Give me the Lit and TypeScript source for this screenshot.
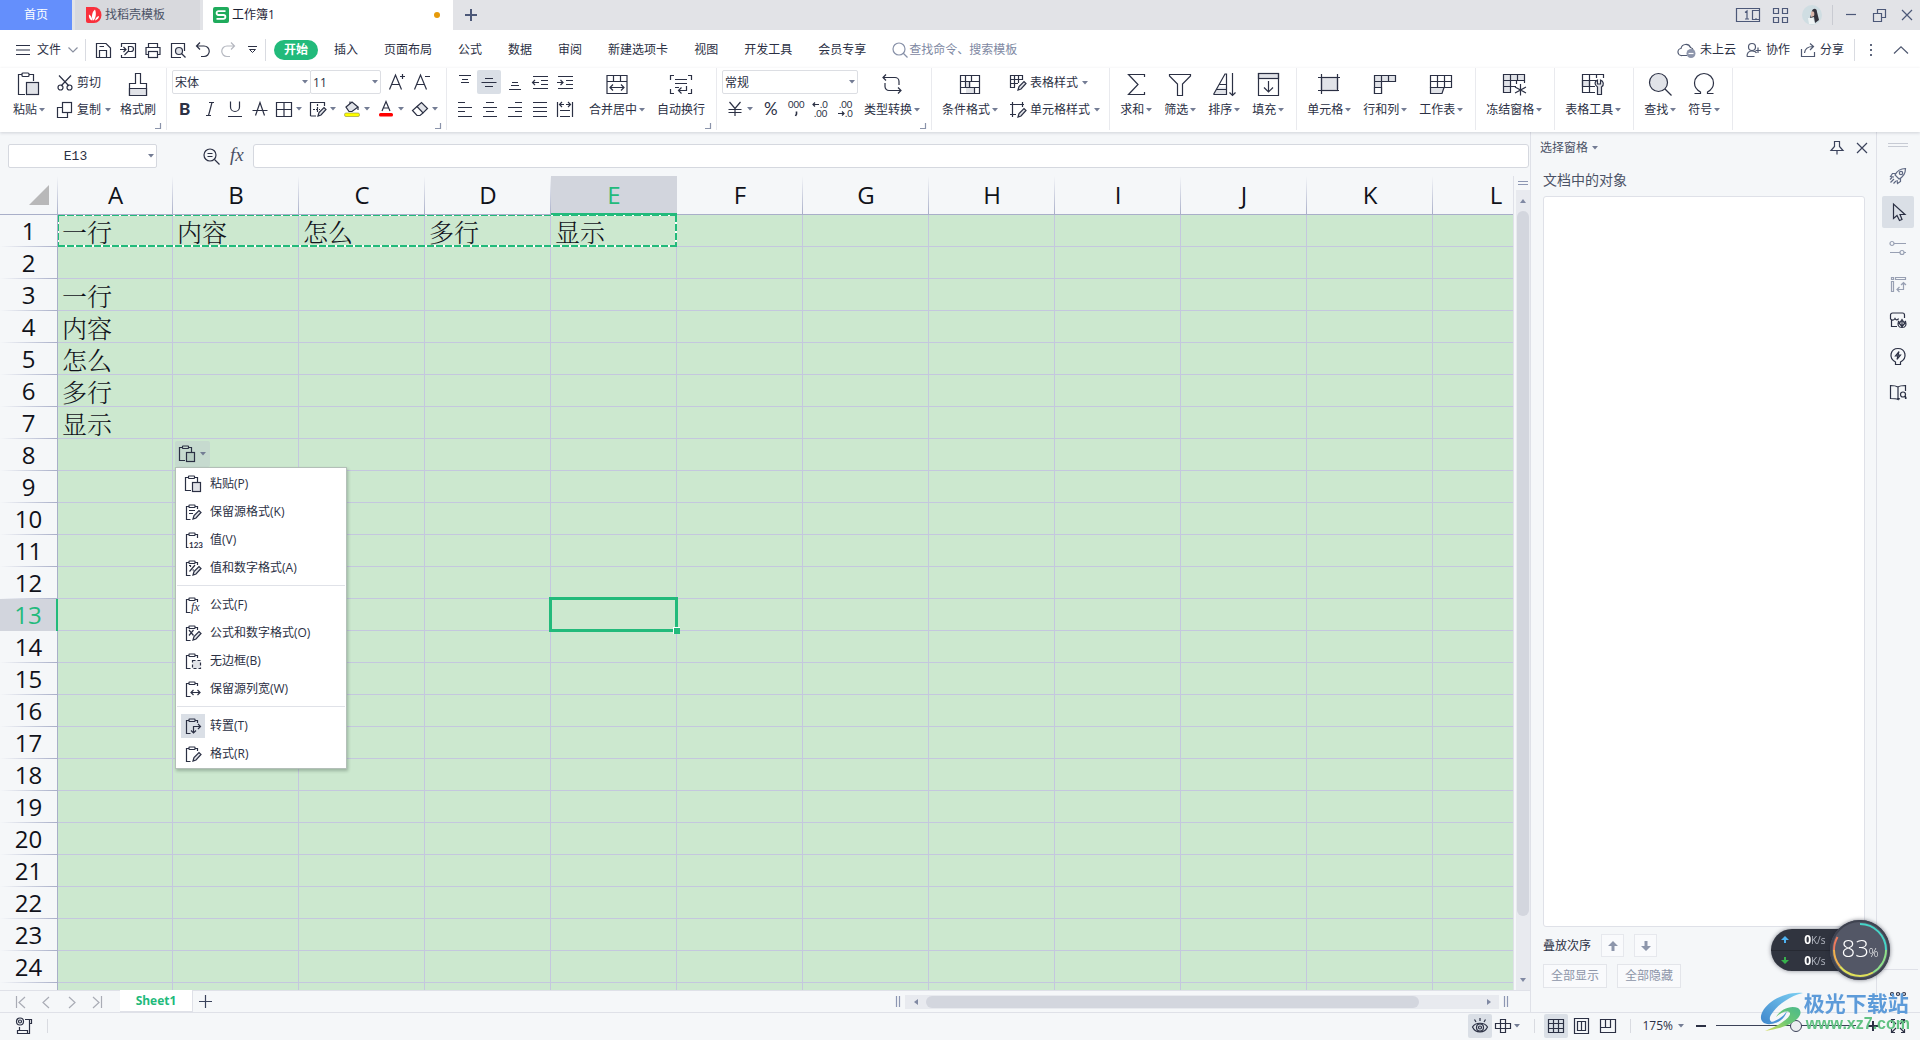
import { LitElement, html, svg, css, nothing, TemplateResult, SVGTemplateResult } from "lit";
import { customElement, state } from "lit/decorators.js";
import { classMap } from "lit/directives/class-map.js";

const icon = (w: number, h: number, body: SVGTemplateResult) =>
  html`<svg class="icon" width=${w} height=${h} viewBox="0 0 ${w} ${h}" aria-hidden="true">${body}</svg>`;

const caret = html`<svg class="caret" width="6" height="4" viewBox="0 0 6 4" aria-hidden="true"><path d="M0 0H6L3 3.6Z" /></svg>`;
const close = icon(12, 12, svg`<path d="M1 1L11 11M11 1L1 11" />`);

/* Ribbon, large */
const big = {
  paste: icon(24, 24, svg`<path d="M8 22.5H1.500V2.500H5M12 2.500H16.500V9" /><rect x="5" y="1" width="7" height="3.500" rx="1" /><rect class="tint" x="9.500" y="10.500" width="12" height="12" />`),
  brush: icon(24, 24, svg`<path d="M9.500 11.500V1.500H14.500V11.500H20.500V23.500H3.500V11.500Z" /><path class="tint" d="M3.500 16.500H20.500V23.500H3.500Z" />`),
  merge: icon(24, 24, svg`<path d="M2 3.500H22V21.500H2ZM2 9.500H22M8.500 3.500V9.500M15.500 3.500V9.500M5 15.500H19M8 12.500L5 15.500 8 18.500M16 12.500L19 15.500 16 18.500" />`),
  wrap: icon(24, 24, svg`<path d="M5 3.500H1.500V8M19 3.500H22.500V8M1.500 17V21.500H5M22.500 17V21.500H19M6 7.500H18M6 11.500H18M6 15.500H10M17.500 14V18.500H10M12.500 15.500L9.500 18.500 12.500 21.500" />`),
  convert: icon(24, 24, svg`<path d="M6 2.500L3 5.500 6 8.500M3 5.500H15A4 4 0 0 1 19 9.500V13M18 15.500L21 18.500 18 21.500M21 18.500H9A4 4 0 0 1 5 14.500V11" />`),
  cond: icon(24, 24, svg`<path class="tint" d="M8 9.500H13V15.500H17V21.500H8Z" stroke="none" /><path d="M2.500 3.500H21.500V21.500H2.500ZM2.500 9.500H21.500M2.500 15.500H21.500M7.500 3.500V15.500M13.500 3.500V9.500M11.500 9.500V15.500M16.500 15.500V21.500" />`),
  sum: icon(24, 24, svg`<path d="M20.500 5V2.500H4.500L14 12.500 4.500 22.500H20.500V20" />`),
  filter: icon(24, 24, svg`<path d="M1.500 2.500H22.500V4L14.500 12V23.500H9.500V12L1.500 4Z" />`),
  sort: icon(24, 24, svg`<path class="tint" d="M5 15.500H14.500V22.500H2Z" stroke="none" /><path d="M1.500 22.500L13 2H14.500V22.500H1.500M7.500 12.500H14.500M4.500 17.500H14.500M20.500 1V23.500M17.500 20.500L20.500 23.500 23.500 20.500" />`),
  fill: icon(24, 24, svg`<rect class="tint" x="2.500" y="1.500" width="20" height="5" /><path d="M2.500 1.500H22.500V23.500H2.500ZM12.500 9V19.500M8 15.500L12.500 20 17 15.500" />`),
  cell: icon(24, 24, svg`<rect class="tint" x="4.500" y="5.500" width="16" height="13" /><path d="M4.500 2V22M20.500 2V17M1 5.500H23M1 18.500H19M20 18.500H22" />`),
  rowcol: icon(24, 24, svg`<path class="tint" d="M1.500 3.500H22.500V9.500H8.500V21.500H1.500Z" /><path d="M1.500 9.500H8.500V3.500M15.500 3.500V9.500" /><path class="blank" d="M1.500 15.500H8.500V21.500H1.500Z" />`),
  sheet: icon(24, 24, svg`<path class="tint" d="M1.500 15.500H15L13 21.500H1.500Z" /><path d="M1.500 3.500H22.500V15.500H1.500ZM1.500 9.500H22.500M8.500 3.500V15.500M15.500 3.500V15.500" />`),
  freeze: icon(24, 24, svg`<path class="tint" d="M1.500 2.500H22.500V8.500H8.500V20.500H1.500Z" /><path d="M1.500 8.500H8.500V2.500M15.500 2.500V8.500M1.500 14.500H14M14.500 8.500V12M22.500 8.500V11M18.500 12V23.500M13 15L24 21M24 15L13 21" />`),
  tool: icon(24, 24, svg`<path class="tint" d="M1.500 8.500H8.500V14.500H1.500Z" /><path d="M22.500 6V2.500H1.500V20.500H14M1.500 8.500H15M1.500 14.500H14M8.500 2.500V20.500M15.500 2.500V6" /><path class="tint" d="M16.500 8V12H19.500V8C22.500 9 23.500 13 20.500 15V22.500H16.500V15C13 13 13.500 9 16.500 8Z" />`),
  find: icon(24, 24, svg`<circle class="tint" cx="10.500" cy="10.500" r="9" /><path d="M17 17L23.500 23.500" />`),
  omega: icon(24, 24, svg`<path d="M2.500 21.500H8.500V20C4 17.500 2.500 14.500 2.500 11A9.500 9.500 0 0 1 21.500 11C21.500 14.500 20 17.500 15.500 20V21.500H21.500" />`),
};

const pen = svg`<path class="tint" d="M8 15L9 11.500 14 6.500 16 8.500 11 14Z" />`;
/* Ribbon, small */
const sm = {
  cut: icon(16, 16, svg`<path d="M2 .5L12 11M14 .5L4 11" /><circle cx="3.500" cy="12.500" r="2.500" /><circle cx="12.500" cy="12.500" r="2.500" />`),
  copy: icon(16, 16, svg`<path d="M5 5.500H.5V15.500H10.500V11" /><rect x="5.500" y=".5" width="9" height="10" />`),
  under: icon(16, 16, svg`<path d="M3.500 .5V6A4.500 4.500 0 0 0 12.500 6V.5M1 15.500H15" />`),
  strike: icon(16, 16, svg`<path d="M3.500 14.500L8 1.500 12.500 14.500M.5 9.500H15.500" />`),
  border: icon(16, 16, svg`<path d="M.5 1.500H15.500V15.500H.5ZM8 1.500V15.500M.5 8.500H15.500" />`),
  draw: icon(16, 16, svg`<path d="M.5 15V1.500H14.500V5M.5 15H6" /><path d="M7.500 3V12M3 8.500H10" stroke-dasharray="2 1" />${pen}`),
  bucket: icon(16, 16, svg`<path class="tint" d="M2 6L8 1 14 6 8 10.500H5Z" /><path d="M6 3V.5M14 6V9" /><rect x=".5" y="12" width="15" height="3.500" rx="1.500" fill="#ff0" stroke="#8a8a40" stroke-width=".6" />`),
  color: icon(16, 16, svg`<path d="M4 10L8 .5 12 10M5.500 7H10.500" /><rect x="1" y="12" width="14" height="3.500" rx="1.500" fill="#f00" stroke="none" />`),
  erase: icon(16, 16, svg`<path class="tint" d="M5 5.500L9.500 1.500 15.500 7.500 11 12Z" /><path d="M5 5.500L.5 9.500 5 14.500H8L11 12" />`),
  top: icon(16, 16, svg`<path d="M2 1.500H14M5 5.500H11M4 8.500H12" />`),
  mid: icon(16, 16, svg`<path d="M4 4.500H12M.5 8.500H15.500M4 12.500H12" />`),
  bottom: icon(16, 16, svg`<path d="M5 8.500H11M4 11.500H12M2 15.500H14" />`),
  outdent: icon(16, 16, svg`<path d="M1 2.500H16M9 6.500H16M9 10.500H16M1 14.500H16M.5 8.500H7M3 6L.5 8.500 3 11" />`),
  indent: icon(16, 16, svg`<path d="M1 2.500H16M9 6.500H16M9 10.500H16M1 14.500H16M0 8.500H6M3.500 6L6 8.500 3.500 11" />`),
  left: icon(16, 16, svg`<path d="M1 1.500H8M1 6.500H15M1 10.500H8M1 15.500H15" />`),
  center: icon(16, 16, svg`<path d="M4 1.500H12M1 6.500H15M4 10.500H12M1 15.500H15" />`),
  right: icon(16, 16, svg`<path d="M8 1.500H15M1 6.500H15M8 10.500H15M1 15.500H15" />`),
  justify: icon(16, 16, svg`<path d="M1 1.500H15M1 6.500H15M1 10.500H15M1 15.500H15" />`),
  distribute: icon(16, 16, svg`<path d="M.5 1V16M15.500 1V16M3 3.500H7M9 3.500H13M5 1L2.500 3.500 5 6M11 1L13.500 3.500 11 6M3 9.500H13M3 15.500H13" />`),
  yen: icon(16, 16, svg`<path d="M2.500 1L8 7.500 13.500 1M8 7.500V15M1.500 8.500H14.500M1.500 11.500H14.500" />`),
  tstyle: icon(16, 16, svg`<path d="M5 12.500H.5V.5H12.500V5M.5 4.500H12.500M.5 8.500H8M4.500 .5V12.500M8.500 .5V8" />${pen}`),
  cstyle: icon(16, 16, svg`<path d="M2.500 0V15M0 2.500H14M12.500 0V5M0 12.500H6" />${pen}`),
};

/* Quick access and title */
const q = {
  menu: icon(14, 12, svg`<path d="M0 1.500H14M0 6H14M0 10.500H14" />`),
  down: icon(10, 6, svg`<path d="M.5 .5L5 5 9.500 .5" stroke="#8a90a0" />`),
  save: icon(16, 16, svg`<path d="M1.500 1.500H11L15.500 6V15.500H1.500ZM4.500 15.500V8.500H11.500V15.500M4.500 4.500H9" />`),
  exp: icon(16, 16, svg`<path d="M1.500 5V1.500H15.500V15.500H1.500V13M0 7.500H5.500M3.500 5L6 7.500 3.500 10M4.500 13L8.500 9V4.500H11A2 2 0 0 1 11 9.500H8.500" />`),
  print: icon(16, 16, svg`<path d="M3.500 5V1.500H12.500V5M3.500 12.500H1V5.500H15V12.500H12.500" /><rect x="3.500" y="9.500" width="9" height="6" />`),
  preview: icon(16, 16, svg`<path d="M14.500 9V1.500H1.500V15.500H11" /><circle class="tint" cx="9" cy="9" r="3.500" /><path d="M11.500 11.500L15.500 15.500" />`),
  undo: icon(16, 16, svg`<path d="M5 .5L1.500 4 5 7.500M1.500 4H9A5 5 0 0 1 9 14.500H6" />`),
  redo: icon(16, 16, svg`<path d="M11 .5L14.500 4 11 7.500M14.500 4H7A5 5 0 0 0 7 14.500H10" stroke="#b5b8c0" />`),
  more: icon(9, 8, svg`<path d="M0 .5H9M1.500 3.500H7.500L4.500 6.500Z" stroke-width="1" />`),
  search: icon(16, 16, svg`<circle cx="7" cy="7" r="6" /><path d="M11 11L15.500 15.500" />`),
  cloud: icon(18, 16, svg`<path d="M9 13.500H4A3.500 3.500 0 0 1 3 6.500A5 5 0 0 1 12.500 5.500C14 6 15 7 15 8" /><circle cx="13" cy="11.500" r="4.500" fill="#8d95ab" stroke="none" /><path d="M10.500 11.500H15.500" stroke="#fff" />`),
  people: icon(16, 16, svg`<circle cx="6" cy="5" r="3.500" /><path d="M1 14.500C1 10 3 9 6 9S10 10 10.500 11M1 14.500H8.500M12 5.500V11M9.500 8.500H15" />`),
  share: icon(16, 16, svg`<path d="M1.500 7V14.500H14.500V10M4.500 11C5 7 8 4.500 13 4.500M10 1.500L13.500 4.500 10 8" />`),
  dots: icon(4, 14, svg`<path d="M1 1H3V3H1ZM1 6H3V8H1ZM1 11H3V13H1Z" fill="#60687e" stroke="none" />`),
  up: icon(16, 8, svg`<path d="M1 7.500L8 .8 15 7.500" />`),
  corner: icon(6, 6, svg`<path d="M5.500 0V5.500H0" stroke="#8a93aa" />`),
};

/* Paste option icons share one clipboard outline */
const board = svg`<path d="M5.500 15.500H1.500V2.500H4M10 2.500H12.500V5" /><rect x="4" y="1" width="6" height="2.500" rx=".5" />`;
const po = (extra: SVGTemplateResult) => icon(16, 16, svg`${board}${extra}`);
const pasteIcon = icon(16, 18, svg`<path d="M6 15.500H.5V2.500H3.500M9.500 2.500H12.500V7" /><rect x="3.500" y="1" width="6" height="2.500" rx=".5" /><rect class="tint" x="7.500" y="7.500" width="8" height="9" />`);

const pasteMenu: { label: string; icon: TemplateResult; on?: boolean }[][] = [
  [
    { label: "粘贴(P)", icon: pasteIcon },
    { label: "保留源格式(K)", icon: po(svg`<path d="M4 6.500H10M4 9.500H8" />${pen}`) },
    { label: "值(V)", icon: icon(16, 16, svg`<path d="M3.500 15.500H1.500V2.500H4M10 2.500H12.500V6" /><rect x="4" y="1" width="6" height="2.500" rx=".5" /><text class="bold" x="4" y="16" font-size="8">123</text>`) },
    { label: "值和数字格式(A)", icon: po(svg`<path d="M4 5.500H5.500V7M10 5L4.500 11.500M9 10H7.500" />${pen}`) },
  ],
  [
    { label: "公式(F)", icon: po(svg`<text class="serif" x="6" y="14" font-size="12">fx</text>`) },
    { label: "公式和数字格式(O)", icon: po(svg`<path d="M4 5L8.500 10.500M8.500 5L4 10.500" />${pen}`) },
    { label: "无边框(B)", icon: po(svg`<rect class="tint" x="7.500" y="7.500" width="8" height="8" stroke-dasharray="3 2" />`) },
    { label: "保留源列宽(W)", icon: po(svg`<path d="M6 11.500H15M8.500 9L6 11.500 8.500 14M12.500 9L15 11.500 12.500 14" />`) },
  ],
  [
    { label: "转置(T)", icon: po(svg`<path d="M8.500 15V8.500H15.500M13 6L15.500 8.500 13 11M6 12.500L8.500 15 11 12.500" />`), on: true },
    { label: "格式(R)", icon: po(pen) },
  ],
];

type Btn = { icon: TemplateResult; name: string; drop?: boolean; on?: boolean };
const fontTools: Btn[] = [
  { icon: icon(16, 16, svg`<text x="2" y="14" font-size="17" class="heavy">B</text>`), name: "加粗" },
  { icon: icon(16, 16, svg`<path d="M7 1.500H12M4 14.500H9M10 1.500L6.500 14.500" />`), name: "倾斜" },
  { icon: sm.under, name: "下划线" },
  { icon: sm.strike, name: "删除线" },
  { icon: sm.border, name: "边框", drop: true },
  { icon: sm.draw, name: "绘图边框", drop: true },
  { icon: sm.bucket, name: "填充颜色", drop: true },
  { icon: sm.color, name: "字体颜色", drop: true },
  { icon: sm.erase, name: "清除", drop: true },
];
const alignTools: Btn[] = [
  { icon: sm.top, name: "顶端对齐" },
  { icon: sm.mid, name: "垂直居中", on: true },
  { icon: sm.bottom, name: "底端对齐" },
  { icon: sm.outdent, name: "减少缩进" },
  { icon: sm.indent, name: "增加缩进" },
  { icon: sm.left, name: "左对齐" },
  { icon: sm.center, name: "居中" },
  { icon: sm.right, name: "右对齐" },
  { icon: sm.justify, name: "两端对齐" },
  { icon: sm.distribute, name: "分散对齐" },
];
const digits = (a: SVGTemplateResult) => icon(16, 18, a);
const numTools: Btn[] = [
  { icon: icon(16, 16, svg`<text x="1" y="14" font-size="17">%</text>`), name: "百分比" },
  { icon: digits(svg`<text x="0" y="8" font-size="9.500">000</text><path d="M8.500 11.500V14L7.500 16" stroke-width="1.600" />`), name: "千位分隔" },
  { icon: digits(svg`<text x="7" y="8" font-size="9.500">.0</text><text x="1" y="17" font-size="9.500">.00</text><path d="M0 4.500H6M2 2.500L0 4.500 2 6.500" />`), name: "增加小数位" },
  { icon: digits(svg`<text x="1" y="8" font-size="9.500">.00</text><text x="7" y="17" font-size="9.500">.0</text><path d="M0 13.500H6M4 11.500L6 13.500 4 15.500" />`), name: "减少小数位" },
];

const menuTabs = ["开始", "插入", "页面布局", "公式", "数据", "审阅", "新建选项卡", "视图", "开发工具", "会员专享"];
const columns = "ABCDEFGHIJKL".split("");
const cells: Record<string, string> = {
  A1: "一行", B1: "内容", C1: "怎么", D1: "多行", E1: "显示",
  A3: "一行", A4: "内容", A5: "怎么", A6: "多行", A7: "显示",
};

const rail: { icon: TemplateResult; name: string; cls?: string }[] = [
  { name: "快捷", cls: "soft", icon: icon(18, 18, svg`<path d="M16.500 1.500C11 1.500 8 4 6 8L10 12C14 10 16.500 7 16.500 1.500ZM7 6.500H3.500L1.500 9.500 5 10M11.500 11V14.500L8.500 16.500 8 13M5 12L1.500 15.500M3 10.500L1 12.500M7 14L4.500 16.500" /><circle cx="12" cy="6" r="1.700" />`) },
  { name: "选择", cls: "on", icon: icon(18, 20, svg`<path d="M4.500 2V16.500L8 13.500 10.500 18.500 13 17.500 11 12.500H16Z" />`) },
  { name: "属性", cls: "pale", icon: icon(18, 18, svg`<circle cx="3" cy="4.500" r="2" /><path d="M5 4.500H17M1 13.500H11M15 13.500H17" /><circle cx="13" cy="13.500" r="2" />`) },
  { name: "分析", cls: "pale", icon: icon(18, 18, svg`<path d="M2.500 2.500H4.500V4.500H2.500ZM6.500 2.500H16.500V4.500H6.500ZM2.500 6.500H4.500V16.500H2.500ZM14.500 15V8M12 10L14.500 7.500 17 10M14.500 14.500H8M10.500 12L8 14.500 10.500 17" />`) },
  { name: "稻壳", icon: icon(18, 18, svg`<path d="M2.500 9V15.500H8M1.500 8V4A2 2 0 0 1 3.500 2H13.500A2 2 0 0 1 15.500 4V7M1.500 8C3 9.500 5 9.500 6 7.500 7 9.500 9 9 9.500 7.500" /><path d="M13 16.500C9 16.500 8.500 13.500 9.500 10.500L11 11.500 13 8.500 15 11.500 16.500 10.500C17.500 13.500 17 16.500 13 16.500ZM13 16V10M13 15.500L10 12M13 15.500L16 12" />`) },
  { name: "灵感", icon: icon(18, 18, svg`<path d="M6.500 17.500V15C-1 11 1.500 1.500 9 1.500S19 11 11.500 15V17.500Z" /><path d="M10 4.500L6.500 9H9L8 12.500 11.500 8H9Z" />`) },
  { name: "查阅", icon: icon(18, 18, svg`<path d="M9 4C6.500 2.500 4 2.500 1.500 2.500V15.500C4 15.500 7 15.500 9 16.500V4C11 2.500 14 2.500 16.500 2.500V8M9 16.500L11 15.500M16.500 13V16" /><circle cx="14" cy="11.500" r="2.500" /><path d="M16 13.500L17.500 15.500" />`) },
];

@customElement("app-root")
export class AppRoot extends LitElement {
  @state() private zoom = 58;

  static styles = css`
    :host {
      display: flex; flex-direction: column; height: 100vh; overflow: hidden;
      background: #f5f7f9; color: #2b3044;
      font: 12px/16px "Open Sans", "Noto Sans CJK SC", sans-serif;
    }
    * { box-sizing: border-box; }
    button, input, select { font: inherit; color: inherit; margin: 0; }
    button { background: none; border: 0; padding: 0; display: inline-flex; align-items: center; justify-content: center; white-space: nowrap; flex: none; }
    .icon { display: block; flex: none; fill: none; stroke: currentColor; stroke-width: 1.2; overflow: visible; }
    .icon text { fill: currentColor; stroke: none; font-family: "Lato", "Liberation Sans", sans-serif; }
    .icon .heavy { font-weight: 900; }
    .icon .bold { font-weight: 700; }
    .icon .serif { font-family: "Liberation Serif", serif; font-style: italic; }
    .tint { fill: #e1e3e8; }
    .blank { fill: #fff; }
    .caret { display: block; flex: none; fill: #737c94; }
    .rule { width: 1px; background: #d9dbe1; flex: none; }
    .spacer { flex: 1; }
    .on { background: #dadfe6; border-radius: 2px; }

    .title { display: flex; height: 30px; background: #e2e3e7; align-items: stretch; flex: none; }
    .home { width: 72px; background: #648ffc; color: #fff; margin-right: 3px; }
    .doc { display: flex; align-items: center; gap: 3px; padding: 0 11px; width: 125px; background: #d8d9dd; color: #4b5266; margin-right: 3px; justify-content: flex-start; }
    .doc.active { width: 250px; background: #fff; color: #1d2233; padding: 0 13px 0 10px; margin: 0; }
    .dot { width: 6px; height: 6px; border-radius: 50%; background: #e69a09; }
    .add { width: 36px; color: #4c5878; }
    .add .icon { stroke-width: 2; }
    .system { display: flex; align-items: center; color: #4c5878; padding-right: 2px; }
    .system .rule { height: 20px; margin: 0 7px 0 10px; background: #c9cbd2; }
    .system .tiles { margin: 0 14px 0 12px; }
    .system .win { width: 22px; height: 30px; }
    .wins { display: flex; gap: 6px; }

    .menu { display: flex; height: 38px; background: #fff; align-items: center; padding: 2px 14px 0 16px; flex: none; }
    .file { gap: 7px; margin-right: 7px; }
    .menu .rule { height: 22px; }
    .quick { display: flex; margin-left: 4px; }
    .quick button { width: 25px; height: 24px; }
    .tabs { display: flex; gap: 6px; margin: 0 25px 0 8px; }
    .tabs button { padding: 0 10px; height: 20px; border-radius: 10px; }
    .tabs .cur { background: #22ba7b; color: #fff; font-weight: 700; }
    .find { display: flex; align-items: center; gap: 1px; color: #8891a8; flex: 1; margin-left: -9px; }
    .find input { border: 0; outline: 0; padding: 0; flex: 1; min-width: 110px; background: none; }
    .find input::placeholder { color: #7e88a2; opacity: 1; }
    .cloud { display: flex; align-items: center; gap: 10px; }
    .cloud button { gap: 4px; }
    .cloud .more { width: 12px; margin-right: 6px; }
    .cloud .up { margin: 0 -3px 0 0; width: 16px; }
    .cloud .icon { color: #4f5870; }

    .ribbon { display: flex; background: #fff; padding-bottom: 2px; box-shadow: 0 1px 3px rgba(60, 66, 90, .2); flex: none; z-index: 1; height: 64px; }
    .group { position: relative; display: flex; gap: 0; padding: 2px 6px 0 4px; border-right: 1px solid #e9eaee; flex: none; align-items: flex-start; }
    .group.first { padding: 2px 4px 0 7px; }
    .group.font { padding: 2px 4px 0 5px; }
    .group.align, .group.num { padding-left: 5px; padding-right: 5px; }
    .large { display: grid; grid-template-rows: 28px 24px; padding: 0 6px; justify-items: center; align-items: center; }
    .label { display: flex; align-items: center; gap: 2px; }
    .stack { display: grid; grid-template-rows: 24px 24px; gap: 3px; }
    .small { padding: 0 3px 0 6px; gap: 4px; justify-content: flex-start; height: 25px; }
    .line { display: flex; align-items: center; height: 24px; }
    .tool { width: 25px; height: 24px; }
    .tool.on { width: 24px; }
    .tool.drop { width: 34px; gap: 4px; }
    .tool.yen { width: 36px; gap: 4px; }
    .aligns { display: grid; grid-template-columns: repeat(5, 25px); grid-template-rows: 24px 24px; gap: 3px 0; margin-right: 6px; }
    .corner { position: absolute; right: 5px; bottom: 1px; }
    .pick { display: grid; align-items: center; border: 1px solid #dcdee3; border-radius: 2px; height: 24px; background: #fff; }
    .pick > * { grid-area: 1 / 1; }
    .pick .caret { justify-self: end; margin-right: 2px; pointer-events: none; }
    .pick select { appearance: none; border: 0; outline: 0; background: none; padding: 1px 14px 0 2px; width: 100%; height: 22px; }
    .pick.face { width: 139px; }
    .pick.size { width: 71px; margin: 0 3px 0 -1px; }
    .pick.kind { width: 136px; }

    .body { flex: 1; min-height: 0; display: grid; grid-template-columns: minmax(0, 1fr) 346px 44px; }
    .work { display: flex; flex-direction: column; min-height: 0; }
    .formula { display: flex; align-items: center; height: 44px; padding: 4px 1px 0 8px; flex: none; }
    .name { width: 149px; margin-right: 46px; border-color: #d5d8df; }
    .name input { border: 0; outline: 0; background: none; text-align: center; width: 100%; padding: 2px 14px 0 0; font: 13px/20px "Liberation Mono", monospace; }
    .formula .fx { margin: 0 8px 0 9px; color: #4a5064; }
    .formula .bar { flex: 1; height: 24px; border: 1px solid #d5d8df; border-radius: 3px; background: #fff; padding: 0 6px; outline: 0; min-width: 0; }
    .gridrow { flex: 1; display: grid; grid-template-columns: minmax(0, 1fr) 2px 14px; min-height: 0; }
    .sheet { position: relative; overflow: hidden; border-right: 1px solid #dfe1e8; }
    table { border-collapse: separate; border-spacing: 0; table-layout: fixed; width: 100%; font-size: 24px; color: #10121a; }
    .c0 { width: 58px; } .c1 { width: 115px; } .cn { width: 126px; }
    th { padding: 0; font-weight: 400; line-height: 28px; }
    thead th { height: 39px; border-bottom: 1px solid #a9afc9;
      background: linear-gradient(#f5f7f9, #a9afc9) right / 1px 100% no-repeat #f5f7f9; }
    thead th.sel { background: #d2d5dd; color: #22ba7b; border-bottom: 2px solid #22ba7b; }
    tbody th { height: 32px; border-right: 1px solid #a9afc9;
      background: linear-gradient(90deg, #f5f7f9, #a9afc9) bottom / 100% 1px no-repeat #f5f7f9; }
    tbody th.sel { background: #d2d5dd; color: #22ba7b; border-right: 2px solid #22ba7b; }
    .all svg { display: block; margin: 0 0 0 29px; fill: #b8b8b9; }
    td { height: 32px; padding: 0 0 0 4px; border-right: 1px solid #c4c7de; border-bottom: 1px solid #c4c7de; background: #cce8cf;
      font: 300 25px/28px "Noto Serif CJK SC", "Noto Sans CJK SC", serif; white-space: nowrap; position: relative; }
    td.pop { z-index: 3; overflow: visible; padding: 0; }
    .picked { position: absolute; inset: -2px -2px -2px -2px; border: 3px solid #22ba7b; z-index: 2; }
    .picked::after { content: ""; position: absolute; right: -5px; bottom: -5px; width: 6px; height: 6px; background: #22ba7b; border: solid #fff; border-width: 1px 0 0 1px; }
    .ants { position: absolute; left: 58px; top: 39px; width: 619px; height: 32px; pointer-events: none; z-index: 2;
      background:
        repeating-linear-gradient(90deg, #22ba7b 0 7px, #fff 7px 9px) top / 100% 1px no-repeat,
        repeating-linear-gradient(90deg, #22ba7b 0 7px, #fff 7px 9px) bottom / 100% 2px no-repeat,
        repeating-linear-gradient(#22ba7b 0 7px, #fff 7px 9px) left / 1px 100% no-repeat,
        repeating-linear-gradient(#22ba7b 0 7px, #fff 7px 9px) right / 2px 100% no-repeat; }
    .paste { position: absolute; left: 2px; top: 2px; color: #2b3044; font: 12px/16px "Open Sans", "Noto Sans CJK SC", sans-serif; }
    .paste > button { width: 35px; height: 26px; gap: 5px; background: #c6dacf; border-radius: 2px; display: flex; }
    .paste > button .tint { fill: #b7cdc2; }
    .popup { width: 172px; background: #fff; border: 1px solid #b3bfb8; box-shadow: 1px 2px 3px rgba(40, 60, 50, .3); padding: 2px 1px 0; }
    .popup button { display: flex; width: 100%; height: 28px; justify-content: flex-start; gap: 5px; padding-left: 4px; }
    .popup .slot { width: 24px; height: 24px; display: grid; place-items: center; border-radius: 0; }
    .popup hr { border: 0; border-top: 1px solid #e0e2e8; margin: 3px 0 5px; }

    .vbar { grid-column: 3; display: flex; flex-direction: column; }
    .vsplit { height: 14px; color: #8d97b3; display: grid; place-items: center; flex: none; }
    .track { flex: 1; background: #e8eaef; display: flex; flex-direction: column; align-items: center; min-height: 0; }
    .track button { height: 21px; width: 14px; }
    .vthumb { width: 12px; flex: 705; border-radius: 6px; background: #d3d6de; }
    .vrest { flex: 53; }
    .sheets { display: flex; height: 22px; border-top: 1px solid #dfe1e8; flex: none; align-items: center; color: #a9acb5; }
    .nav { display: flex; padding: 0 9px 0 7px; }
    .nav button { width: 26px; height: 20px; }
    .sheets .tab { align-self: stretch; width: 73px; background: #fff; color: #22ba7b; font-weight: 700; border-right: 1px solid #dfe1e8; border-bottom: 1px solid #dfe1e8; margin-top: -1px; }
    .sheets .plus { width: 24px; height: 20px; color: #3b435c; }
    .hbar { display: flex; align-items: center; gap: 5px; margin: 0 22px 0 auto; width: 612px; color: #8d97b3; }
    .hbar .track { flex-direction: row; height: 14px; }
    .hbar .track button { width: 21px; height: 14px; }
    .hthumb { height: 12px; flex: 492; border-radius: 6px; background: #d3d6de; }
    .hrest { flex: 59; }
    .arrow { fill: #8089a3; display: block; }

    .pane { border-left: 1px solid #dfe1e8; display: flex; flex-direction: column; padding: 6px 11px 24px 12px; color: #4b5266; min-height: 0; }
    .pane header { display: flex; align-items: center; height: 20px; margin-left: -3px; gap: 10px; }
    .pane header .pin { margin-left: auto; }
    .pane header .shut { margin: 0 -5px 0 0; width: 16px; }
    .pane header .icon { color: #3b435c; }
    .panetitle { gap: 4px; }
    .pane h2 { margin: 12px 0 6px; font: 400 14px/20px "Open Sans", "Noto Sans CJK SC", sans-serif; }
    .list { flex: 1; background: #fff; border: 1px solid #dfe1e8; border-radius: 3px; min-height: 0; }
    .order { display: flex; align-items: center; gap: 10px; margin: 7px 0; color: #2b3044; }
    .order button { width: 23px; height: 23px; border: 1px solid #e6e8ed; background: #f9fafc; }
    .shows { display: flex; gap: 10px; color: #8d95a8; }
    .shows button { width: 64px; height: 24px; border: 1px solid #e3e5ea; background: #f9fafc; }
    .rail { border-left: 1px solid #dfe1e8; display: flex; flex-direction: column; align-items: center; gap: 4px; padding: 11px 2px 0 1px; }
    .rail .grip { width: 20px; height: 4px; border: solid #c7cbd4; border-width: 1px 0; margin: 0 0 9px; }
    .rail button { width: 32px; height: 32px; }
    .rail .soft { color: #5f6983; } .rail .pale { color: #98a0b3; }
    .rail .end { margin-top: auto; width: 100%; height: 43px; border-top: 1px solid #dfe1e8; border-radius: 0; padding-top: 6px; }

    .status { height: 28px; border-top: 1px solid #dfe1e8; display: flex; align-items: center; flex: none; padding: 0 15px 2px 15px; }
    .status .rule { height: 14px; margin: 0 9px 0 14px; }
    .status .rule.tight { margin: 0 11px 0 8px; }
    .status .view { width: 24px; height: 24px; margin-right: 2px; }
    .status .cross { width: 26px; gap: 3px; }
    .status .pct { gap: 5px; }
    .status .step { width: 12px; height: 20px; margin-left: 11px; }
    .status .full { margin-left: 12px; }
    .status label { display: flex; margin: 0 0 0 9px; }
    input[type="range"] { appearance: none; width: 140px; height: 16px; background: linear-gradient(#3b4258, #3b4258) center / 100% 1px no-repeat; outline: 0; }
    input[type="range"]::-webkit-slider-thumb { appearance: none; width: 12px; height: 12px; border-radius: 50%; border: 1px solid #3b4258; background: #eceef0; }

    .net { position: fixed; right: 30px; bottom: 60px; display: flex; align-items: center; z-index: 5; color: #fff; }
    .rates { width: 90px; height: 42px; border-radius: 21px 0 0 21px; background: #30343f; display: grid; grid-template-rows: 21px 21px; margin-right: -31px; box-shadow: 0 0 4px rgba(30, 34, 50, .5); }
    .rate { display: grid; grid-template-columns: 22px 8px 1fr; align-items: center; padding-left: 10px; }
    .rate + .rate { border-top: 1px solid #262932; }
    .rate b { text-align: right; }
    .rate small { font-size: 10px; color: #b4b8c2; }
    .ball { width: 60px; height: 60px; border-radius: 50%; background: #535766; display: grid; place-items: center; box-shadow: 0 0 4px rgba(30, 34, 50, .6); z-index: 1; }
    .ball > * { grid-area: 1 / 1; }
    .load { font: 300 24px/28px "Open Sans", sans-serif; }
    .load small { font-size: 12px; }
    .mark { position: fixed; right: 10px; bottom: 6px; display: flex; align-items: center; z-index: 4; pointer-events: none; }
    .mark div { display: grid; }
    .mark strong { font: 700 21px/24px "Noto Sans CJK SC", sans-serif; color: #5d9bd9; }
    .mark span { font: 700 16px/20px "Liberation Sans", sans-serif; color: #62c283; padding-left: 2px; }
  `;

  private tool(b: Btn) {
    return html`<button class=${classMap({ tool: true, on: !!b.on, drop: !!b.drop })} aria-label=${b.name} title=${b.name}>${b.icon}${b.drop ? caret : nothing}</button>`;
  }

  private large(ic: TemplateResult, text: string, drop = true) {
    return html`<button class="large">${ic}<span class="label">${text}${drop ? caret : nothing}</span></button>`;
  }

  private small(ic: TemplateResult, text: string, drop = true) {
    return html`<button class="small">${ic}${text}${drop ? caret : nothing}</button>`;
  }

  private titleBar() {
    return html`<div class="title">
      <button class="home">首页</button>
      <button class="doc">
        <svg width="16" height="16" viewBox="0 0 16 16" aria-hidden="true"><path d="M0 0H8A7.500 8 0 0 1 8 16H2A2 2 0 0 1 0 14Z" fill="#f9303c" /><path d="M7.500 13.500C5 12 5.500 5 9 2.500C10.500 6 10 11 7.500 13.500ZM6.500 13.500C3.500 13 2.500 9.500 3 7.500C5 8.500 6 10.500 6.500 13.500ZM9 13.500C9.500 11 11 9.500 13 9C13 11 11.500 13 9 13.500Z" fill="#fff" /></svg>
        找稻壳模板
      </button>
      <button class="doc active">
        <svg width="16" height="16" viewBox="0 0 16 16" aria-hidden="true"><rect width="16" height="16" rx="2" fill="#1fab5c" /><path d="M12.500 4.200H5.500A1.800 1.800 0 0 0 5.500 8H10.500A1.800 1.800 0 0 1 10.500 11.800H3.500" fill="none" stroke="#fff" stroke-width="1.800" /></svg>
        工作簿1<span class="spacer"></span><span class="dot"></span>
      </button>
      <button class="add" aria-label="新建">${icon(12, 12, svg`<path d="M6 0V12M0 6H12" />`)}</button>
      <span class="spacer"></span>
      <div class="system">
        <button aria-label="窗口布局">${icon(25, 15, svg`<path d="M.5 .5H23.500V13.500H.5ZM23.500 2.500H16.500V11.500H23.500M19 11H21M9 4.500L11 3V11M9 11H13" />`)}</button>
        <button class="tiles" aria-label="应用">${icon(15, 15, svg`<path d="M.5 .5H5.500V5.500H.5ZM9.500 .5H14.500V5.500H9.500ZM.5 9.500H5.500V14.500H.5ZM9.500 9.500H14.500V14.500H9.500Z" />`)}</button>
        <button aria-label="账户"><svg width="20" height="20" viewBox="0 0 20 20"><circle cx="10" cy="10" r="10" fill="#cfdde2" /><path d="M10 6C11 3 15 3 15 7L17 15 13 18 12 12 8 13Z" fill="#32313b" /><path d="M9 7C12 5 13 8 12 11L9 12Z" fill="#d9b7ac" /><path d="M6 13L11 13 13 19 7 19Z" fill="#eef3f4" /></svg></button>
        <span class="rule"></span>
        <div class="wins">
          <button class="win" aria-label="最小化">${icon(12, 12, svg`<path d="M1 5.500H11" />`)}</button>
          <button class="win" aria-label="还原">${icon(13, 13, svg`<path d="M.5 4.500H8.500V12.500H.5ZM4.500 4.500V.5H12.500V8.500H8.500" />`)}</button>
          <button class="win" aria-label="关闭">${close}</button>
        </div>
      </div>
    </div>`;
  }

  private menuBar() {
    return html`<div class="menu">
      <button class="file">${q.menu}文件${q.down}</button><span class="rule"></span>
      <div class="quick">
        ${([["保存", q.save], ["输出", q.exp], ["打印", q.print], ["预览", q.preview], ["撤销", q.undo], ["恢复", q.redo], ["更多", q.more]] as [string, TemplateResult][]).map(
          ([n, i]) => html`<button aria-label=${n}>${i}</button>`)}
      </div>
      <span class="rule"></span>
      <nav class="tabs">${menuTabs.map((t, i) => html`<button class=${i ? "" : "cur"}>${t}</button>`)}</nav>
      <label class="find">${q.search}<input type="text" aria-label="查找" placeholder="查找命令、搜索模板" /></label>
      <div class="cloud">
        <button>${q.cloud}未上云</button><button>${q.people}协作</button><button>${q.share}分享</button>
        <span class="rule"></span>
        <button class="more" aria-label="更多">${q.dots}</button>
        <button class="up" aria-label="收起">${q.up}</button>
      </div>
    </div>`;
  }

  private ribbon() {
    const corner = html`<button class="corner" aria-label="设置">${q.corner}</button>`;
    return html`<div class="ribbon">
      <div class="group first">
        ${this.large(big.paste, "粘贴")}
        <div class="stack">${this.small(sm.cut, "剪切", false)}${this.small(sm.copy, "复制")}</div>
        ${this.large(big.brush, "格式刷", false)}${corner}
      </div>
      <div class="group font">
        <div class="stack">
          <div class="line">
            <label class="pick face"><select aria-label="字体"><option>宋体</option></select>${caret}</label>
            <label class="pick size"><select aria-label="字号"><option>11</option></select>${caret}</label>
            <button class="tool" aria-label="增大字号">${icon(18, 18, svg`<path d="M1.500 16.500L7.500 2 13.500 16.500M4 11.500H11M14.500 1V6M12 3.500H17" />`)}</button>
            <button class="tool" aria-label="减小字号">${icon(18, 18, svg`<path d="M1.500 16.500L7.500 2 13.500 16.500M4 11.500H11M12 3.500H17" />`)}</button>
          </div>
          <div class="line">${fontTools.map((b) => this.tool(b))}</div>
        </div>${corner}
      </div>
      <div class="group align">
        <div class="aligns">${alignTools.map((b) => this.tool(b))}</div>
        ${this.large(big.merge, "合并居中")}${this.large(big.wrap, "自动换行", false)}${corner}
      </div>
      <div class="group num">
        <div class="stack">
          <label class="pick kind"><select aria-label="数字格式"><option>常规</option></select>${caret}</label>
          <div class="line"><button class="tool yen" aria-label="货币">${sm.yen}${caret}</button>${numTools.map((b) => this.tool(b))}</div>
        </div>
        ${this.large(big.convert, "类型转换")}${corner}
      </div>
      <div class="group">
        ${this.large(big.cond, "条件格式")}
        <div class="stack">${this.small(sm.tstyle, "表格样式")}${this.small(sm.cstyle, "单元格样式")}</div>
      </div>
      <div class="group">${this.large(big.sum, "求和")}${this.large(big.filter, "筛选")}${this.large(big.sort, "排序")}${this.large(big.fill, "填充")}</div>
      <div class="group">${this.large(big.cell, "单元格")}${this.large(big.rowcol, "行和列")}${this.large(big.sheet, "工作表")}</div>
      <div class="group">${this.large(big.freeze, "冻结窗格")}</div>
      <div class="group">${this.large(big.tool, "表格工具")}</div>
      <div class="group">${this.large(big.find, "查找")}${this.large(big.omega, "符号")}</div>
    </div>`;
  }

  private pasteOptions() {
    return html`<div class="paste">
      <button aria-label="粘贴选项">${pasteIcon}${caret}</button>
      <div class="popup">
        ${pasteMenu.map((g, i) => html`${i ? html`<hr />` : nothing}${g.map(
          (m) => html`<button><span class=${classMap({ slot: true, on: !!m.on })}>${m.icon}</span>${m.label}</button>`)}`)}
      </div>
    </div>`;
  }

  private cell(col: string, row: number) {
    const id = col + row;
    if (id === "B8") return html`<td class="pop">${this.pasteOptions()}</td>`;
    if (id === "E13") return html`<td><span class="picked"></span></td>`;
    return html`<td>${cells[id] ?? nothing}</td>`;
  }

  private sheet() {
    const rows = Array.from({ length: 25 }, (_, i) => i + 1);
    return html`<div class="sheet">
      <table>
        <colgroup><col class="c0" />${columns.map((_, i) => html`<col class=${i ? "cn" : "c1"} />`)}</colgroup>
        <thead><tr>
          <th class="all"><svg width="20" height="20" viewBox="0 0 20 20"><path d="M20 0V20H0Z" /></svg></th>
          ${columns.map((c) => html`<th class=${c === "E" ? "sel" : ""}>${c}</th>`)}
        </tr></thead>
        <tbody>${rows.map((r) => html`<tr><th class=${r === 13 ? "sel" : ""}>${r < 25 ? r : nothing}</th>${columns.map((c) => this.cell(c, r))}</tr>`)}</tbody>
      </table>
      <div class="ants"></div>
    </div>`;
  }

  private arrow(d: string, name: string) {
    return html`<button aria-label=${name}><svg class="arrow" width="6" height="6" viewBox="0 0 6 6"><path d=${d} /></svg></button>`;
  }

  private work() {
    const nav = ["M2.500 0V12M11 1L5 6.500 11 12", "M9 1L3 6.500 9 12", "M3 1L9 6.500 3 12", "M9.500 0V12M1 1L7 6.500 1 12"];
    const names = ["第一张", "上一张", "下一张", "最后一张"];
    const split = icon(4, 11, svg`<path d="M.5 0V11M3.500 0V11" />`);
    return html`<div class="work">
      <div class="formula">
        <label class="pick name"><input type="text" aria-label="名称框" .value=${"E13"} />${caret}</label>
        <button aria-label="缩放">${icon(17, 17, svg`<circle cx="7" cy="7" r="6" /><path d="M11.500 11.500L16.500 16.500M4.500 5.500H9.500M4.500 8.500H9.500" />`)}</button>
        <button class="fx" aria-label="插入函数">${icon(16, 18, svg`<text class="serif" x="1" y="14" font-size="19">fx</text>`)}</button>
        <input class="bar" type="text" aria-label="编辑栏" />
      </div>
      <div class="gridrow">
        ${this.sheet()}
        <div class="vbar">
          <div class="vsplit">${icon(10, 4, svg`<path d="M0 .5H10M0 3.500H10" />`)}</div>
          <div class="track">${this.arrow("M0 5L3 1 6 5Z", "向上")}<div class="vthumb"></div><div class="vrest"></div>${this.arrow("M0 1L3 5 6 1Z", "向下")}</div>
        </div>
      </div>
      <div class="sheets">
        <div class="nav">${nav.map((d, i) => html`<button aria-label=${names[i]}>${icon(12, 12, svg`<path d=${d} />`)}</button>`)}</div>
        <button class="tab">Sheet1</button>
        <button class="plus" aria-label="新建工作表">${icon(13, 13, svg`<path d="M6.500 0V13M0 6.500H13" />`)}</button>
        <div class="hbar">${split}
          <div class="track">${this.arrow("M5 0L1 3 5 6Z", "向左")}<div class="hthumb"></div><div class="hrest"></div>${this.arrow("M1 0L5 3 1 6Z", "向右")}</div>
          ${split}</div>
      </div>
    </div>`;
  }

  private pane() {
    const block = (d: string) => icon(10, 10, svg`<path d=${d} fill="#8d96ab" stroke="none" />`);
    return html`<aside class="pane">
        <header><button class="panetitle">选择窗格${caret}</button>
          <button class="pin" aria-label="固定">${icon(14, 14, svg`<path d="M4.500 .5H9.500V5.500L13 9.500H1L4.500 5.500ZM7 9.500V13.500" />`)}</button>
          <button class="shut" aria-label="关闭">${close}</button></header>
        <h2>文档中的对象</h2>
        <div class="list"></div>
        <div class="order">叠放次序
          <button aria-label="上移">${block("M5 0L10 5H6.500V10H3.500V5H0Z")}</button>
          <button aria-label="下移">${block("M5 10L10 5H6.500V0H3.500V5H0Z")}</button></div>
        <div class="shows"><button>全部显示</button><button>全部隐藏</button></div>
      </aside>
      <div class="rail"><span class="grip"></span>
        ${rail.map((r) => html`<button class=${r.cls ?? ""} aria-label=${r.name}>${r.icon}</button>`)}
        <button class="end" aria-label="更多">${icon(18, 6, svg`<circle cx="3" cy="3" r="1.500" /><circle cx="9" cy="3" r="1.500" /><circle cx="15" cy="3" r="1.500" />`)}</button>
      </div>`;
  }

  private status() {
    return html`<div class="status">
      <button aria-label="录制">${icon(18, 18, svg`<circle cx="5" cy="4.500" r="3.500" /><circle cx="5" cy="4.500" r="1.500" /><path d="M10 2.500H16.500V6.500H14.500V16.500H2.500V13.500H12.500V16M4.500 10V13M14.500 2.500V7" />`)}</button>
      <span class="rule"></span><span class="spacer"></span>
      <button class="view on" aria-label="护眼模式">${icon(16, 18, svg`<path d="M.5 10C3.500 5 12.500 5 15.500 10C12.500 16.500 3.500 16.500 .5 10ZM8 1V4M2.500 2.500L4 5M13.500 2.500L12 5" /><circle cx="8" cy="10.500" r="3.500" /><circle cx="8" cy="10.500" r="1.500" />`)}</button>
      <button class="cross" aria-label="阅读模式">${icon(16, 16, svg`<path d="M5.500 1.500H10.500V5.500H15.500V10.500H10.500V14.500H5.500V10.500H.5V5.500H5.500ZM5.500 5.500V10.500M10.500 5.500V10.500M5.500 5.500H10.500M5.500 10.500H10.500" />`)}${caret}</button>
      <span class="rule"></span>
      <button class="view on" aria-label="普通视图">${icon(16, 14, svg`<path d="M.5 .5H15.500V13.500H.5ZM.5 4.500H15.500M.5 9.500H15.500M5.500 .5V13.500M10.500 .5V13.500" />`)}</button>
      <button class="view" aria-label="页面布局">${icon(16, 16, svg`<path d="M.5 .5H14.500V15.500H.5ZM3.500 3.500H11.500V12.500H3.500ZM7.500 3.500V12.500" />`)}</button>
      <button class="view" aria-label="分页预览">${icon(16, 14, svg`<path d="M.5 .5H15.500V13.500H.5ZM.5 8.500H10.500V.5M5.500 .5V8.500" />`)}</button>
      <span class="rule tight"></span>
      <button class="pct">175%${caret}</button>
      <button class="step" aria-label="缩小">${icon(10, 10, svg`<path d="M0 5H10" stroke-width="2" />`)}</button>
      <label><input type="range" aria-label="缩放比例" .value=${String(this.zoom)} @input=${(e: Event) => (this.zoom = +(e.target as HTMLInputElement).value)} /></label>
      <button class="step" aria-label="放大">${icon(10, 10, svg`<path d="M0 5H10M5 0V10" stroke-width="2" />`)}</button>
      <button class="full" aria-label="全屏">${icon(14, 14, svg`<path d="M.5 4V.5H4M10 .5H13.500V4M13.500 10V13.500H10M4 13.500H.5V10M.5 .5L5 5M13.500 .5L9 5M13.500 13.500L9 9M.5 13.500L5 9" />`)}</button>
    </div>`;
  }

  private overlays() {
    return html`<div class="mark">
        <svg width="44" height="42" viewBox="0 0 44 42" aria-hidden="true">
          <defs>
            <linearGradient id="sky" x1="0" y1="1" x2="1" y2="0"><stop offset="0" stop-color="#3f86cc" /><stop offset="1" stop-color="#7cd0f3" /></linearGradient>
            <linearGradient id="leaf" x1="0" y1="1" x2="1" y2="0"><stop offset="0" stop-color="#d6dd58" /><stop offset=".5" stop-color="#6cc873" /><stop offset="1" stop-color="#4bb98c" /></linearGradient>
          </defs>
          <path d="M43 2C24 0 4 12 1 25C0 32 7 35 15 32C9 31 8 27 13 21C19 13 30 5 43 2Z" fill="url(#sky)" />
          <path d="M16 26C21 17 32 14 38 17C46 23 35 36 5 40C18 35 31 27 30 22C28 19 21 21 16 26Z" fill="url(#leaf)" />
          <path d="M4 30C10 34 22 28 27 20C24 31 11 36 4 30Z" fill="#4b95d6" />
        </svg>
        <div><strong>极光下载站</strong><span>www.xz7.com</span></div>
      </div>
      <div class="net">
        <div class="rates">
          <div class="rate"><svg width="8" height="8" viewBox="0 0 8 8"><path d="M4 0L8 4H5V7H3V4H0Z" fill="#4db2f2" /></svg><b>0</b><small>K/s</small></div>
          <div class="rate"><svg width="8" height="8" viewBox="0 0 8 8"><path d="M4 7L8 3H5V0H3V3H0Z" fill="#36b14b" /></svg><b>0</b><small>K/s</small></div>
        </div>
        <div class="ball">
          <svg width="60" height="60" viewBox="0 0 60 60" fill="none" stroke-width="2" aria-hidden="true">
            <circle cx="30" cy="30" r="29" stroke="#3f4350" />
            <path d="M30 4A26 26 0 0 1 56 30" stroke="#46d5c8" /><path d="M56 30A26 26 0 0 1 43 52.500" stroke="#8fe08a" />
            <path d="M43 52.500A26 26 0 0 1 10 46.500" stroke="#dfe05a" /><path d="M10 46.500A26 26 0 0 1 4 30" stroke="#f0b04e" /><path d="M4 30A26 26 0 0 1 7.500 17" stroke="#ee7a5c" />
          </svg>
          <span class="load">83<small>%</small></span>
        </div>
      </div>`;
  }

  render() {
    return html`${this.titleBar()}${this.menuBar()}${this.ribbon()}
      <div class="body">${this.work()}${this.pane()}</div>
      ${this.status()}${this.overlays()}`;
  }
}
